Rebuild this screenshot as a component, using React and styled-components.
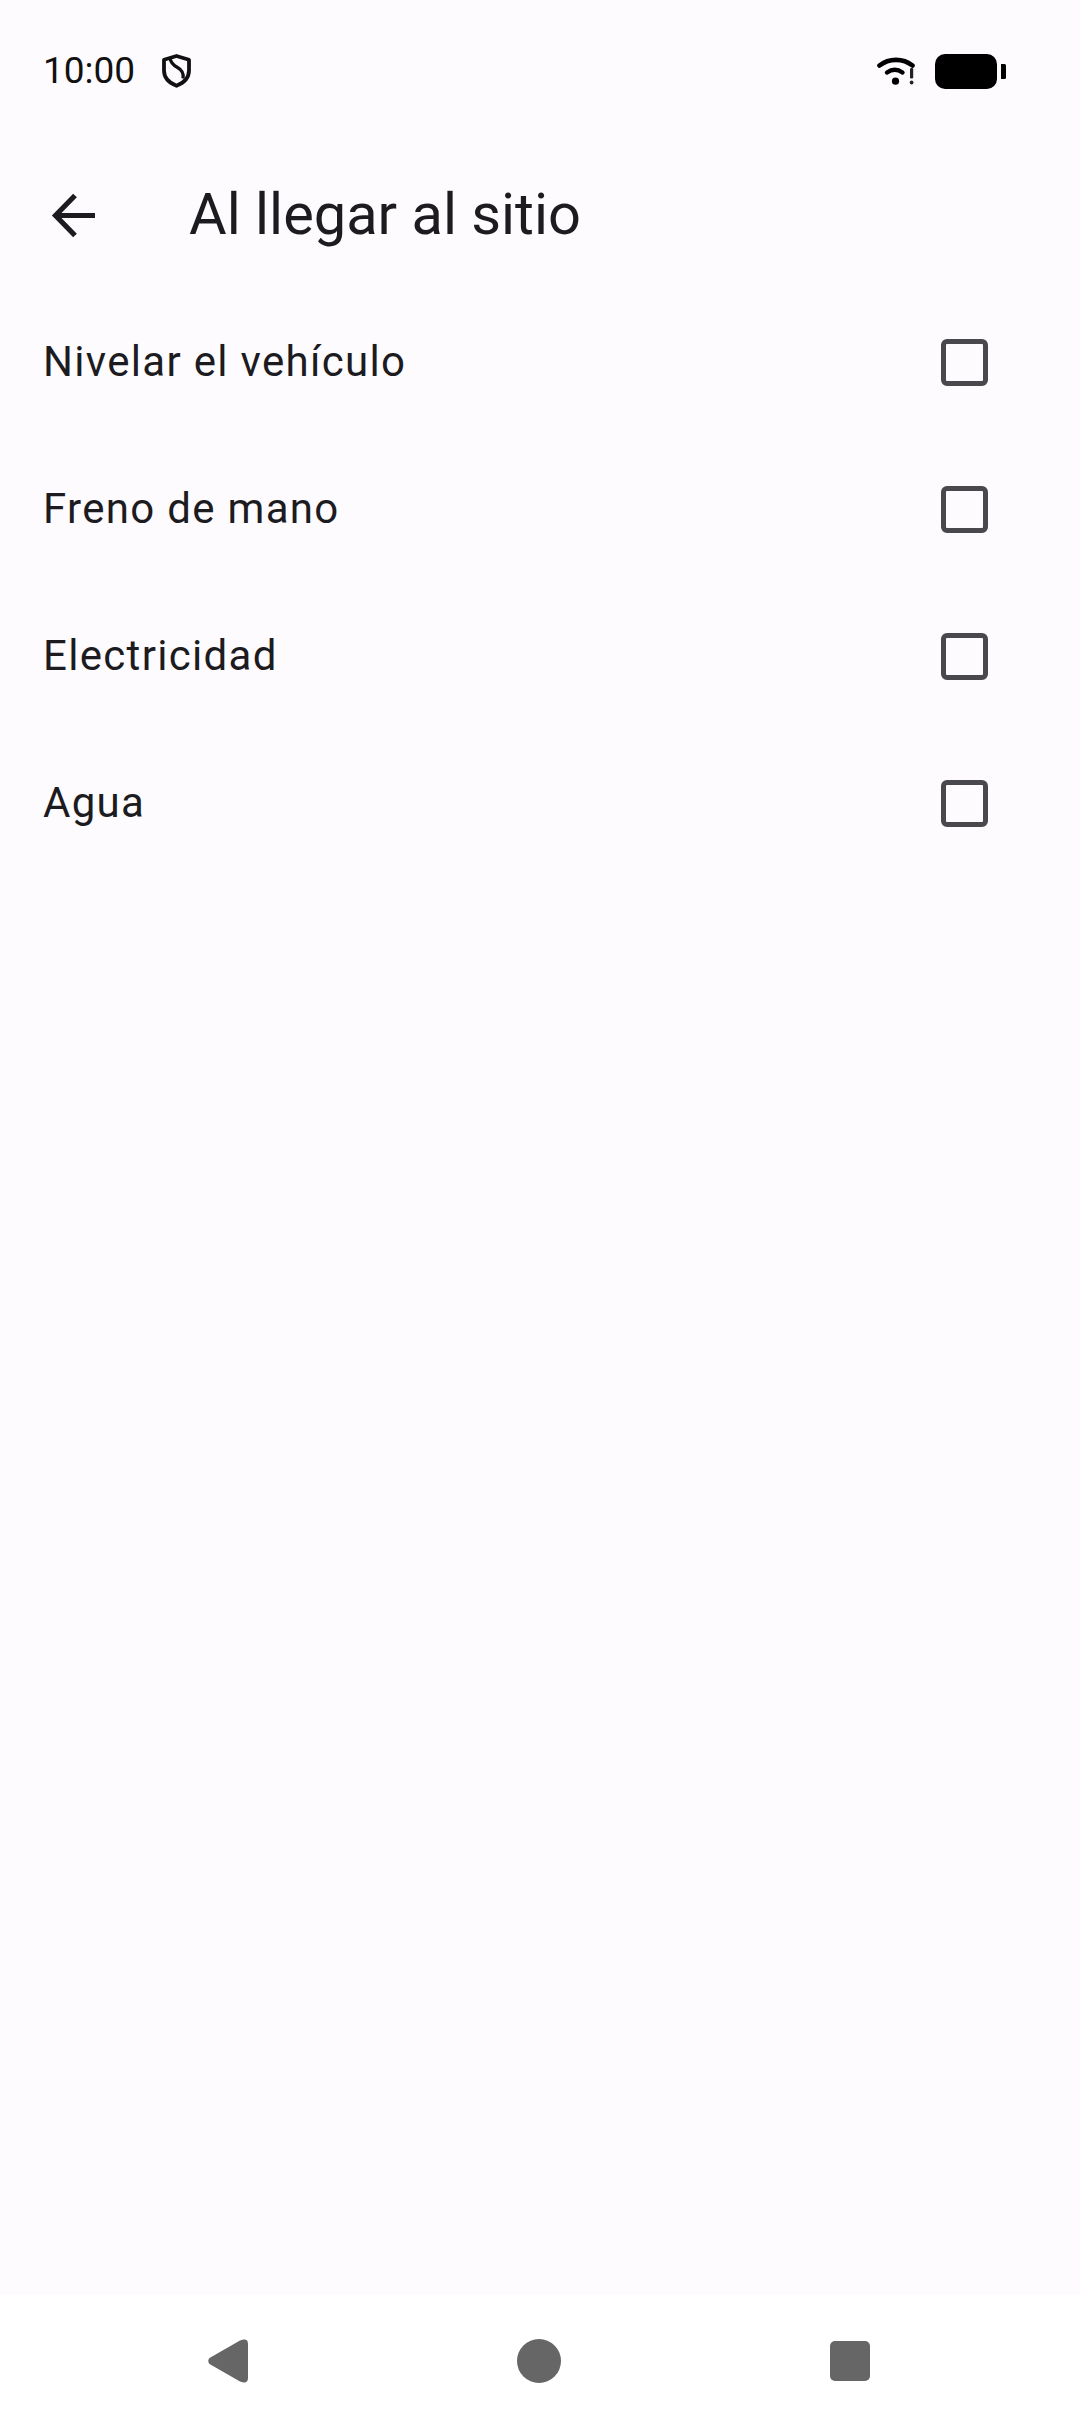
import React from "react";
import styled, { createGlobalStyle } from "styled-components";

const Global = createGlobalStyle`
  html, body { margin: 0; padding: 0; background: #fefbfe; }
  * { box-sizing: border-box; }
`;
const Screen = styled.div`
  width: 1080px; height: 2424px; display: flex; flex-direction: column;
  background: #fefbfe; font-family: Roboto, "Liberation Sans", sans-serif; color: #1c1b1f; overflow: hidden;
`;
const StatusBar = styled.div`
  height: 142px; flex: none; display: flex; align-items: flex-start; justify-content: space-between;
  padding: 50px 74px 0 43px;
`;
const StatusGroup = styled.div`display: flex; align-items: center; height: 42px; gap: ${p => p.$gap}px;`;
const Time = styled.span`font-size: 37px; line-height: 42px; color: #111;`;
const AppBar = styled.header`height: 147px; flex: none; display: flex; align-items: center; padding-left: 42px;`;
const BackButton = styled.div`width: 63px; height: 63px; flex: none; display: flex;`;
const Title = styled.h1`margin: 0 0 3px 84px; font-size: 57.75px; font-weight: 400; line-height: 76px; color: #1c1b1f;`;
const List = styled.div`flex: 1; display: flex; flex-direction: column;`;
const Row = styled.div`height: 147px; flex: none; display: flex; align-items: center; justify-content: space-between; padding: 0 92px 0 43px;`;
const Label = styled.span`font-size: 42px; letter-spacing: 1.31px; line-height: 60px; color: #1c1b1f; margin-bottom: 2px;`;
const Check = styled.span`width: 47px; height: 47px; flex: none; border: 5px solid #49484d; border-radius: 6px;`;
const NavBar = styled.nav`
  height: 129px; flex: none; background: #fff; display: flex; align-items: flex-start; justify-content: space-between;
  padding: 44px 210px 0 208px;
`;
const NavIcon = styled.svg`width: ${p => p.$w}px; height: 44px; flex: none; display: block;`;

const Shield = () => (
  <svg width="29" height="34" viewBox="0 0 29 34" fill="none" style={{ display: "block" }}>
    <path d="M14.500 2 2 5.800v10.700c0 7 5 12.300 12.500 15.300 7.500-3 12.500-8.300 12.500-15.300V5.800L14.500 2Z" stroke="#111" strokeWidth="3.800" strokeLinejoin="round" />
    <path d="M8 4c.5 4.500 3 7 7.500 9.500 4.500 2.500 6.500 6 5.500 11" stroke="#111" strokeWidth="3.200" />
  </svg>
);
const Wifi = () => (
  <svg width="38" height="28" viewBox="0 0 38 28" fill="none" style={{ display: "block" }}>
    <path d="M2.500 8.500C12 1 26 1 35.500 8.500" stroke="#000" strokeWidth="4.600" strokeLinecap="round" />
    <path d="M10 15.500c5-3.500 10.500-3.500 15.500 0" stroke="#000" strokeWidth="4.400" strokeLinecap="round" />
    <circle cx="18.500" cy="24.200" r="3.600" fill="#000" />
    <rect x="33" y="11" width="3.200" height="10.500" rx="1.200" fill="#222" />
    <circle cx="34.600" cy="25.500" r="1.900" fill="#222" />
  </svg>
);
const Battery = () => (
  <svg width="71" height="35" viewBox="0 0 71 35" style={{ display: "block" }}>
    <rect x="0" y="0" width="62" height="35" rx="10" fill="#000" />
    <path d="M66 10h3.500a1.500 1.500 0 0 1 1.500 1.500v12a1.500 1.500 0 0 1-1.500 1.500H66Z" fill="#000" />
  </svg>
);

const items = ["Nivelar el vehículo", "Freno de mano", "Electricidad", "Agua"];

export default function App() {
  return (
    <Screen>
      <Global />
      <StatusBar>
        <StatusGroup $gap={27}>
          <Time>10:00</Time>
          <Shield />
        </StatusGroup>
        <StatusGroup $gap={20}>
          <Wifi />
          <Battery />
        </StatusGroup>
      </StatusBar>
      <AppBar>
        <BackButton>
          <svg width="63" height="63" viewBox="0 0 63 63" fill="none">
            <path d="M53 31.500H15M33 11.500 13.500 31.500 33 51.500" stroke="#1c1b1f" strokeWidth="5.200" />
          </svg>
        </BackButton>
        <Title>Al llegar al sitio</Title>
      </AppBar>
      <List>
        {items.map(t => (
          <Row key={t}>
            <Label>{t}</Label>
            <Check />
          </Row>
        ))}
      </List>
      <NavBar>
        <NavIcon $w={40} viewBox="0 0 40 44">
          <path d="M1.500 19 32 1.500Q40-1.500 40 5v34q0 6.500-8 3.500L1.500 25q-2.500-3 0-6Z" fill="#666" />
        </NavIcon>
        <NavIcon $w={44} viewBox="0 0 44 44"><circle cx="22" cy="22" r="22" fill="#666" /></NavIcon>
        <NavIcon $w={40} viewBox="0 0 40 44"><rect x="0" y="2" width="40" height="40" rx="5" fill="#666" /></NavIcon>
      </NavBar>
    </Screen>
  );
}
